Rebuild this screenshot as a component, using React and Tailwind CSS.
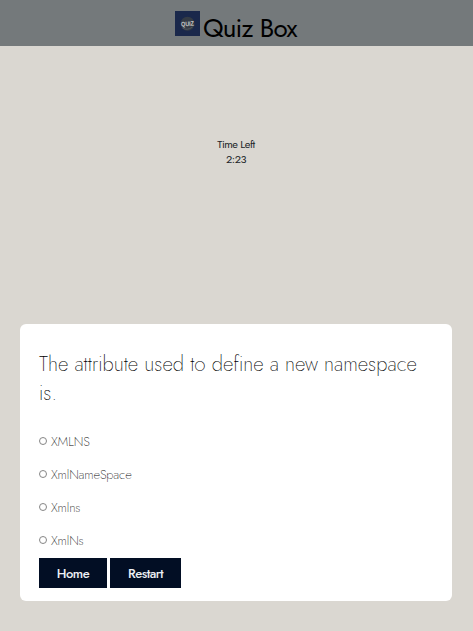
const options = ["XMLNS", "XmlNameSpace", "Xmlns", "XmlNs"];

function Logo() {
  return (
    <svg viewBox="0 0 25 25" className="h-[25px] w-[25px] shrink-0">
      <rect width="25" height="25" fill="#1a284b" />
      <circle cx="12.5" cy="12.8" r="7" fill="#343b45" />
      <path d="M7.500 17 Q12 20 17.500 16" stroke="#50565c" strokeWidth="1" fill="none" />
      <text x="12.5" y="15" textAnchor="middle" fontFamily="Liberation Sans" fontSize="6.5" fontWeight="700" textLength="13" lengthAdjust="spacingAndGlyphs" fill="#c9cac9" transform="rotate(-4 12.5 12.5)">QUIZ</text>
    </svg>
  );
}

export default function App() {
  return (
    <div className="flex h-[631px] w-[473px] flex-col overflow-hidden bg-[#dad7d1] font-['Jost','Lato',sans-serif] text-[#212529] [font-feature-settings:'liga']">
      <header className="flex h-[46px] shrink-0 justify-center bg-[#74797b] pt-[11px]">
        <Logo />
        <h1 className="ml-[3px] mt-[1px] h-[32px] w-[95px] whitespace-nowrap text-[26px] font-normal leading-[32px] tracking-[-0.8px] text-black">Quiz Box</h1>
      </header>
      <div className="mt-[91px] h-[187px] shrink-0 pr-px text-center text-[11px] leading-[15px] tracking-[-0.5px]">
        <p>Time Left</p>
        <p>2:23</p>
      </div>
      <main className="ml-5 h-[277px] w-[432px] shrink-0 rounded-[6px] bg-white px-[19px] pt-[26px]">
        <h2 className="whitespace-nowrap text-[20.4px] font-extralight leading-[29px] text-black">
          The attribute used to define a new namespace
          <br />
          is.
        </h2>
        <div className="mt-[17px]">
          {options.map((option) => (
            <label key={option} className="flex h-[33px] items-center text-[13px] font-extralight tracking-[-0.14px] text-black">
              <input type="radio" name="answer" className="mr-[4px] h-[8px] w-[8px] -translate-y-px appearance-none rounded-full border border-[#858585]" />
              <span>{option}</span>
            </label>
          ))}
        </div>
        <div className="mt-px flex gap-[3px] text-[13px] font-medium tracking-[-0.5px] text-[#edf0f5]">
          <button className="h-[30px] w-[68px] bg-[#020e24] pt-[2px]">Home</button>
          <button className="h-[30px] w-[71px] bg-[#020e24] pt-[2px]">Restart</button>
        </div>
      </main>
    </div>
  );
}
